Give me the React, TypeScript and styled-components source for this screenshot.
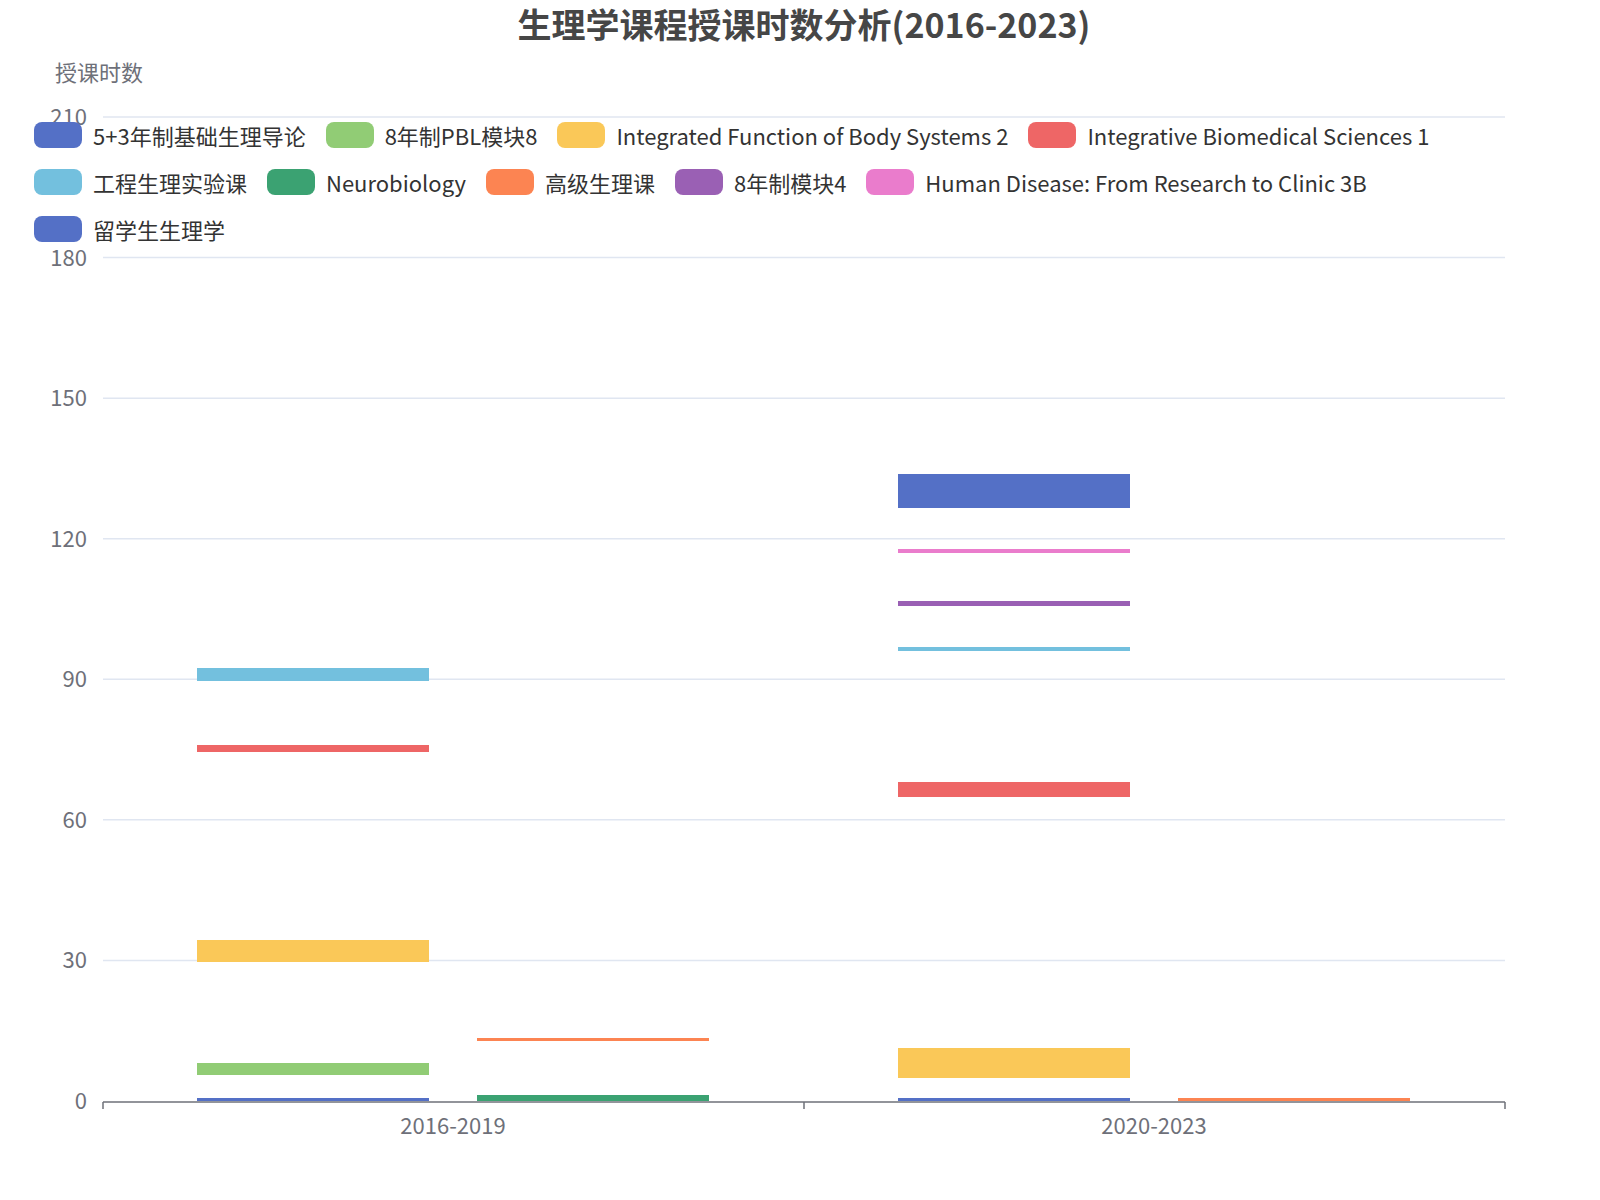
import React from "react";
import styled, { createGlobalStyle } from "styled-components";

const Global = createGlobalStyle`
  body { margin: 0; background: #fff; font-family: "Noto Sans CJK SC", "Noto Sans", sans-serif; }
`;

const Stage = styled.div`
  position: relative;
  width: 1600px;
  height: 1200px;
  overflow: hidden;
`;

const Title = styled.h1`
  margin: 0;
  padding-top: 2px;
  text-align: center;
  font-size: 34px;
  font-weight: 700;
  color: #464646;
  line-height: 44px;
  padding-left: 8px;
`;

const Legend = styled.div`
  position: absolute;
  left: 34px;
  top: 122px;
  width: 1540px;
  display: flex;
  flex-wrap: wrap;
  row-gap: 21px;
  column-gap: 20px;
`;

const Item = styled.div`
  display: flex;
  align-items: center;
  gap: 11px;
  height: 26px;
  font-size: 22px;
  color: #333;
  white-space: nowrap;
`;

const Swatch = styled.span<{ $c: string }>`
  width: 48px;
  height: 26px;
  border-radius: 8px;
  background: ${p => p.$c};
`;

const C = {
  blue: "#5470c6", green: "#91cc75", yellow: "#fac858", red: "#ee6666",
  cyan: "#73c0de", dgreen: "#3ba272", orange: "#fc8452", purple: "#9a60b4", pink: "#ea7ccc",
};

const legend: [string, string][] = [
  ["5+3年制基础生理导论", C.blue], ["8年制PBL模块8", C.green],
  ["Integrated Function of Body Systems 2", C.yellow], ["Integrative Biomedical Sciences 1", C.red],
  ["工程生理实验课", C.cyan], ["Neurobiology", C.dgreen], ["高级生理课", C.orange],
  ["8年制模块4", C.purple], ["Human Disease: From Research to Clinic 3B", C.pink],
  ["留学生生理学", C.blue],
];

// [x, y1, y2, color]
const bars: [number, number, number, string][] = [
  [197, 1098, 1101, C.blue], [197, 1063, 1075, C.green], [197, 940, 962, C.yellow],
  [197, 745, 752, C.red], [197, 668, 681, C.cyan],
  [477, 1038, 1041, C.orange], [477, 1095, 1101, C.dgreen],
  [898, 1098, 1101, C.blue], [898, 1048, 1078, C.yellow], [898, 782, 797, C.red],
  [898, 647, 651, C.cyan], [898, 601, 606, C.purple], [898, 549, 553, C.pink], [898, 474, 508, C.blue],
  [1178, 1098, 1101, C.orange],
];

const ticks = [0, 30, 60, 90, 120, 150, 180, 210];
const yOf = (v: number) => 1101 - v * (984 / 210);

export default function App() {
  return (
    <Stage>
      <Global />
      <Title>生理学课程授课时数分析(2016-2023)</Title>
      <svg width="1600" height="1200" style={{ position: "absolute", left: 0, top: 0 }}
        fontFamily='"Noto Sans CJK SC", sans-serif'>
        <text x="55" y="81" fontSize="22" fill="#6e7079">授课时数</text>
        {ticks.map(t => (
          <g key={t}>
            {t > 0 && <line x1="103" x2="1505" y1={yOf(t)} y2={yOf(t)} stroke="#e0e6f1" strokeWidth="1.5" />}
            <text x="87" y={yOf(t) + 8} fontSize="22" fill="#6e7079" textAnchor="end">{t}</text>
          </g>
        ))}
        {bars.map(([x, a, b, c], i) => (
          <rect key={i} x={x} y={a} width="232" height={b - a} fill={c} />
        ))}
        <line x1="103" x2="1505" y1="1102" y2="1102" stroke="#6e7079" strokeWidth="1.5" />
        {[103, 804, 1505].map(x => (
          <line key={x} x1={x} x2={x} y1="1102" y2="1109" stroke="#6e7079" strokeWidth="1.5" />
        ))}
        <text x="453" y="1134" fontSize="22" fill="#6e7079" textAnchor="middle">2016-2019</text>
        <text x="1154" y="1134" fontSize="22" fill="#6e7079" textAnchor="middle">2020-2023</text>
      </svg>
      <Legend>
        {legend.map(([n, c], i) => (
          <Item key={i}><Swatch $c={c} />{n}</Item>
        ))}
      </Legend>
    </Stage>
  );
}
